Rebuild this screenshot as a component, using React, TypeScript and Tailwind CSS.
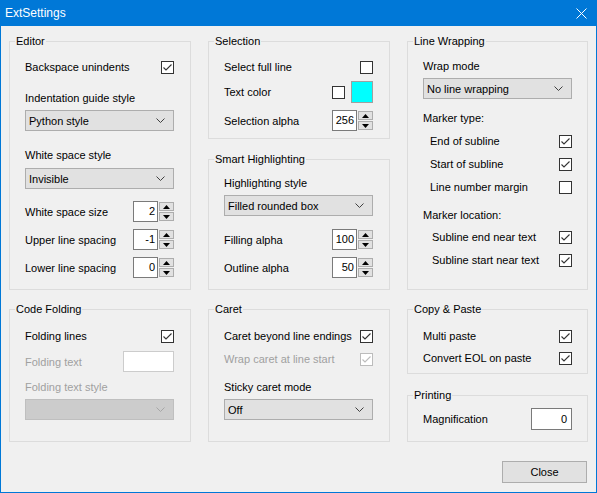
import React from 'react';

type GroupProps = { title: string; h: string; pr?: string; children: React.ReactNode };

function Group({ title, h, pr = 'pr-[16px]', children }: GroupProps) {
  return (
    <div className={`relative border border-[#dcdcdc] pl-[15px] flex flex-col ${pr} ${h}`}>
      <span className="absolute left-[5px] -top-[9px] px-[1px] bg-[#f0f0f0] leading-[16px] text-black">{title}</span>
      {children}
    </div>
  );
}

function Check({ checked = false, disabled = false }: { checked?: boolean; disabled?: boolean }) {
  const color = disabled ? '#bcbcbc' : '#333333';
  return (
    <span
      className={`inline-flex w-[13px] h-[13px] bg-white border shrink-0 ${disabled ? 'border-[#bcbcbc]' : 'border-[#333333]'}`}
    >
      {checked && (
        <svg width="11" height="11" viewBox="0 0 11 11">
          <polyline points="1.5,5.5 4,8 9.5,2.5" fill="none" stroke={color} strokeWidth="1.1" />
        </svg>
      )}
    </span>
  );
}

function Chevron({ color = '#404040' }: { color?: string }) {
  return (
    <svg width="9" height="5" viewBox="0 0 9 5">
      <polyline points="0.5,0.5 4.5,4.5 8.5,0.5" fill="none" stroke={color} strokeWidth="1" />
    </svg>
  );
}

function Select({ value, disabled = false }: { value?: string; disabled?: boolean }) {
  return (
    <div
      className={`h-[21px] flex items-center justify-between pl-[3px] pr-[8px] border ${
        disabled ? 'bg-[#cccccc] border-[#bfbfbf]' : 'bg-[#e1e1e1] border-[#adadad]'
      }`}
    >
      <span className="leading-[16px]">{value}</span>
      <Chevron color={disabled ? '#a6a6a6' : '#404040'} />
    </div>
  );
}

function Arrow({ up }: { up?: boolean }) {
  return (
    <svg width="7" height="4" viewBox="0 0 7 4">
      <polygon points={up ? '0,4 7,4 3.5,0' : '0,0 7,0 3.5,4'} fill="#000" />
    </svg>
  );
}

function Spin({ value }: { value: string }) {
  return (
    <div className="flex items-center h-[21px]">
      <div className="w-[25px] h-[21px] border border-[#7a7a7a] bg-white text-right pr-[2px] leading-[19px]">{value}</div>
      <div className="ml-[1px] flex flex-col justify-between h-[19px]">
        <div className="w-[15px] h-[9px] bg-[#e1e1e1] border border-[#adadad] flex items-center justify-center">
          <Arrow up />
        </div>
        <div className="w-[15px] h-[9px] bg-[#e1e1e1] border border-[#adadad] flex items-center justify-center">
          <Arrow />
        </div>
      </div>
    </div>
  );
}

function Row({ label, children, className = '', disabled = false }: { label: string; children: React.ReactNode; className?: string; disabled?: boolean }) {
  return (
    <div className={`flex items-center justify-between ${className}`}>
      <span className={`leading-[16px] ${disabled ? 'text-[#a0a0a0]' : 'text-black'}`}>{label}</span>
      {children}
    </div>
  );
}

function Label({ text, className = '', disabled = false }: { text: string; className?: string; disabled?: boolean }) {
  return <div className={`leading-[16px] ${disabled ? 'text-[#a0a0a0]' : 'text-black'} ${className}`}>{text}</div>;
}

export default function App() {
  return (
    <div className="w-[597px] h-[493px] bg-[#0078d7] flex flex-col px-[1px] pb-[1px] font-['Liberation_Sans',Arial,sans-serif] text-[11px] text-black select-none">
      {/* Title bar */}
      <div className="h-[26px] flex items-center justify-between pl-[4px] pr-[9px] text-white">
        <span className="text-[12px] leading-[16px]">ExtSettings</span>
        <svg width="11" height="11" viewBox="0 0 11 11">
          <line x1="0.5" y1="0.5" x2="10.5" y2="10.5" stroke="#fff" strokeWidth="1" />
          <line x1="10.5" y1="0.5" x2="0.5" y2="10.5" stroke="#fff" strokeWidth="1" />
        </svg>
      </div>

      {/* Body */}
      <div className="flex-1 bg-[#f0f0f0] flex flex-col">
        <div className="flex gap-[17px] pt-[15px] pl-[8px] pr-[7px]">
          {/* Column 1 */}
          <div className="w-[182px] flex flex-col gap-[19px]">
            <Group title="Editor" h="h-[249px]">
              <Row label="Backspace unindents" className="h-[20px] mt-[15px]">
                <Check checked />
              </Row>
              <Label text="Indentation guide style" className="mt-[13px]" />
              <div className="mt-[4px]">
                <Select value="Python style" />
              </div>
              <Label text="White space style" className="mt-[16px]" />
              <div className="mt-[5px]">
                <Select value="Invisible" />
              </div>
              <Row label="White space size" className="h-[21px] mt-[12px]">
                <Spin value="2" />
              </Row>
              <Row label="Upper line spacing" className="h-[21px] mt-[7px]">
                <Spin value="-1" />
              </Row>
              <Row label="Lower line spacing" className="h-[21px] mt-[7px]">
                <Spin value="0" />
              </Row>
            </Group>
            <Group title="Code Folding" h="h-[133px]">
              <Row label="Folding lines" className="h-[20px] mt-[16px]">
                <Check checked />
              </Row>
              <Row label="Folding text" disabled className="h-[21px] mt-[5px]">
                <div className="w-[51px] h-[21px] bg-white border border-[#cccccc]" />
              </Row>
              <Label text="Folding text style" disabled className="mt-[7px]" />
              <div className="mt-[4px]">
                <Select disabled />
              </div>
            </Group>
          </div>

          {/* Column 2 */}
          <div className="w-[182px] flex flex-col">
            <Group title="Selection" h="h-[98px]">
              <Row label="Select full line" className="h-[20px] mt-[15px]">
                <Check />
              </Row>
              <Row label="Text color" className="h-[22px] mt-[4px]">
                <div className="flex items-center gap-[6px]">
                  <Check />
                  <div className="w-[22px] h-[22px] bg-[#00ffff] border border-[#a0a0a0]" />
                </div>
              </Row>
              <Row label="Selection alpha" className="h-[21px] mt-[7px]">
                <Spin value="256" />
              </Row>
            </Group>
            <div className="mt-[20px]">
              <Group title="Smart Highlighting" h="h-[131px]">
                <Label text="Highlighting style" className="mt-[15px]" />
                <div className="mt-[4px]">
                  <Select value="Filled rounded box" />
                </div>
                <Row label="Filling alpha" className="h-[21px] mt-[13px]">
                  <Spin value="100" />
                </Row>
                <Row label="Outline alpha" className="h-[21px] mt-[7px]">
                  <Spin value="50" />
                </Row>
              </Group>
            </div>
            <div className="mt-[19px]">
              <Group title="Caret" h="h-[133px]">
                <Row label="Caret beyond line endings" className="h-[20px] mt-[16px]">
                  <Check checked />
                </Row>
                <Row label="Wrap caret at line start" disabled className="h-[20px] mt-[3px]">
                  <Check checked disabled />
                </Row>
                <Label text="Sticky caret mode" className="mt-[10px]" />
                <div className="mt-[4px]">
                  <Select value="Off" />
                </div>
              </Group>
            </div>
          </div>

          {/* Column 3 */}
          <div className="w-[181px] flex flex-col">
            <Group title="Line Wrapping" h="h-[249px]" pr="pr-[15px]">
              <Label text="Wrap mode" className="mt-[16px]" />
              <div className="mt-[4px]">
                <Select value="No line wrapping" />
              </div>
              <Label text="Marker type:" className="mt-[11px]" />
              <Row label="End of subline" className="h-[20px] mt-[5px] pl-[7px]">
                <Check checked />
              </Row>
              <Row label="Start of subline" className="h-[20px] mt-[3px] pl-[7px]">
                <Check checked />
              </Row>
              <Row label="Line number margin" className="h-[20px] mt-[3px] pl-[7px]">
                <Check />
              </Row>
              <Label text="Marker location:" className="mt-[10px]" />
              <Row label="Subline end near text" className="h-[20px] mt-[4px] pl-[9px]">
                <Check checked />
              </Row>
              <Row label="Subline start near text" className="h-[20px] mt-[3px] pl-[9px]">
                <Check checked />
              </Row>
            </Group>
            <div className="mt-[19px]">
              <Group title="Copy & Paste" h="h-[65px]" pr="pr-[15px]">
                <Row label="Multi paste" className="h-[20px] mt-[16px]">
                  <Check checked />
                </Row>
                <Row label="Convert EOL on paste" className="h-[20px] mt-[2px]">
                  <Check checked />
                </Row>
              </Group>
            </div>
            <div className="mt-[21px]">
              <Group title="Printing" h="h-[47px]" pr="pr-[15px]">
                <Row label="Magnification" className="h-[22px] mt-[12px]">
                  <div className="w-[41px] h-[22px] bg-white border border-[#7a7a7a] text-right pr-[4px] leading-[20px]">0</div>
                </Row>
              </Group>
            </div>
          </div>
        </div>

        <div className="flex justify-end pr-[9px] mt-[19px]">
          <button className="w-[85px] h-[22px] bg-[#e1e1e1] border border-[#adadad] text-black text-[11px] leading-[20px]">
            Close
          </button>
        </div>
      </div>
    </div>
  );
}
